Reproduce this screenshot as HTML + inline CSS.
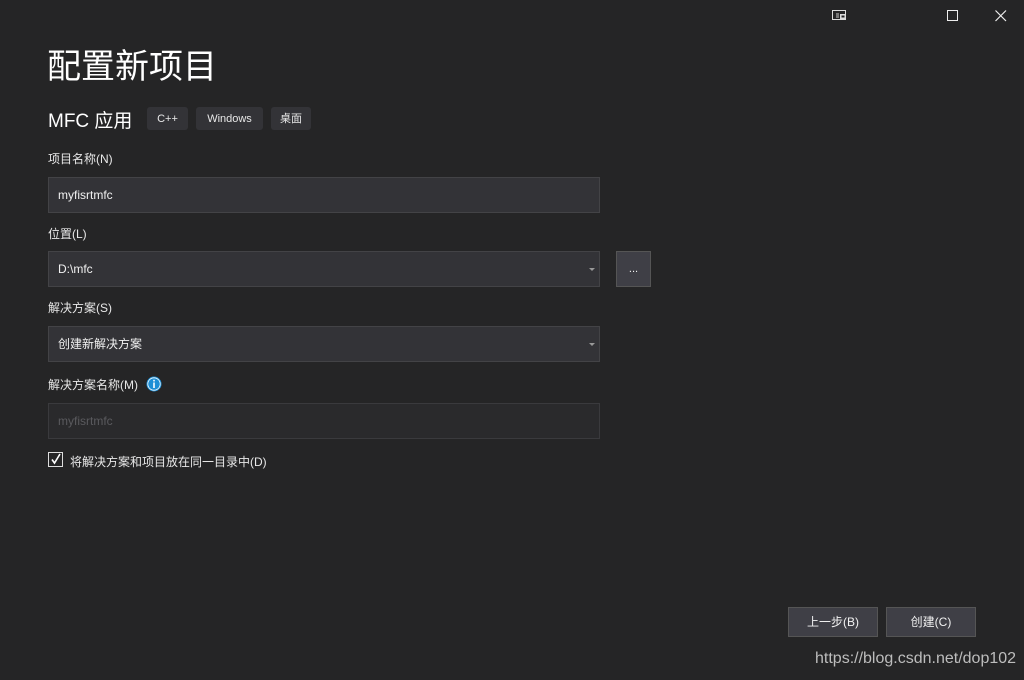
<!DOCTYPE html>
<html><head><meta charset="utf-8"><style>
*{margin:0;padding:0;box-sizing:border-box}
body{width:1024px;height:680px;background:#252526;color:#f1f1f1;font-family:"Liberation Sans","Noto Sans CJK SC",sans-serif;position:relative;overflow:hidden}
.a{position:absolute}
.lbl{font-size:12px;color:#e8e8e8}
.inp{position:absolute;left:48px;width:552px;height:36px;background:#333337;border:1px solid #434346;font-size:12px;color:#f1f1f1;padding:0 0 0 9px;line-height:34px}
.tag{position:absolute;top:107px;height:23px;background:#333337;border-radius:3px;font-size:11px;line-height:24px;text-align:center;color:#e8e8e8}
.caret{position:absolute;right:4px;top:16px;width:0;height:0;border-left:3px solid transparent;border-right:3px solid transparent;border-top:3px solid #999}
.btn{position:absolute;top:607px;height:30px;background:#3f3f46;border:1px solid #555;font-size:12px;line-height:28px;text-align:center;color:#f1f1f1}
</style></head><body>
<svg class="a" style="left:832px;top:10px" width="16" height="12"><rect x="0.5" y="0.5" width="13" height="9" fill="none" stroke="#ddd"/><rect x="4" y="3" width="3" height="5" fill="#777"/><rect x="8" y="4" width="6" height="5" fill="#ddd"/><rect x="9.5" y="5.5" width="3" height="2" fill="#252526"/></svg>
<svg class="a" style="left:947px;top:10px" width="12" height="12"><rect x="0.5" y="0.5" width="10" height="10" fill="none" stroke="#eee"/></svg>
<svg class="a" style="left:995px;top:10px" width="12" height="12"><path d="M0.5 0.5L11 11M11 0.5L0.5 11" stroke="#eee" stroke-width="1.2"/></svg>
<div class="a" style="left:47px;top:39px;font-size:34px;color:#fff">配置新项目</div>
<div class="a" style="left:48px;top:106px;font-size:19px;color:#fff">MFC 应用</div>
<div class="tag" style="left:147px;width:41px">C++</div>
<div class="tag" style="left:196px;width:67px">Windows</div>
<div class="tag" style="left:271px;width:40px">桌面</div>
<div class="a lbl" style="left:48px;top:150px">项目名称(N)</div>
<div class="inp" style="top:177px">myfisrtmfc</div>
<div class="a lbl" style="left:48px;top:225px">位置(L)</div>
<div class="inp" style="top:251px">D:\mfc<div class="caret"></div></div>
<div class="a" style="left:616px;top:251px;width:35px;height:36px;background:#3f3f46;border:1px solid #555;font-size:11px;text-align:center;line-height:34px">...</div>
<div class="a lbl" style="left:48px;top:299px">解决方案(S)</div>
<div class="inp" style="top:326px">创建新解决方案<div class="caret"></div></div>
<div class="a lbl" style="left:48px;top:376px">解决方案名称(M)</div>
<svg class="a" style="left:146px;top:376px" width="16" height="16"><circle cx="8" cy="8" r="7.5" fill="#1e8fd6"/><circle cx="8" cy="8" r="6.2" fill="none" stroke="#fff" stroke-width="0.8"/><rect x="7.2" y="6.5" width="1.6" height="5.5" fill="#fff"/><rect x="7.2" y="3.8" width="1.6" height="1.6" fill="#fff"/></svg>
<div class="inp" style="top:403px;background:#2a2a2c;border-color:#3a3a3d;color:#5a5a5e">myfisrtmfc</div>
<div class="a" style="left:48px;top:452px;width:15px;height:15px;border:1px solid #ddd;background:#252526"></div>
<svg class="a" style="left:49px;top:452px" width="14" height="14"><path d="M3 7.5L5.5 11L11 2" fill="none" stroke="#fff" stroke-width="1.6"/></svg>
<div class="a lbl" style="left:70px;top:453px">将解决方案和项目放在同一目录中(D)</div>
<div class="btn" style="left:788px;width:90px">上一步(B)</div>
<div class="btn" style="left:886px;width:90px">创建(C)</div>
<div class="a" style="left:815px;top:650px;font-size:16px;color:#bdbdbd">https://blog.csdn.net/dop102</div>
</body></html>
